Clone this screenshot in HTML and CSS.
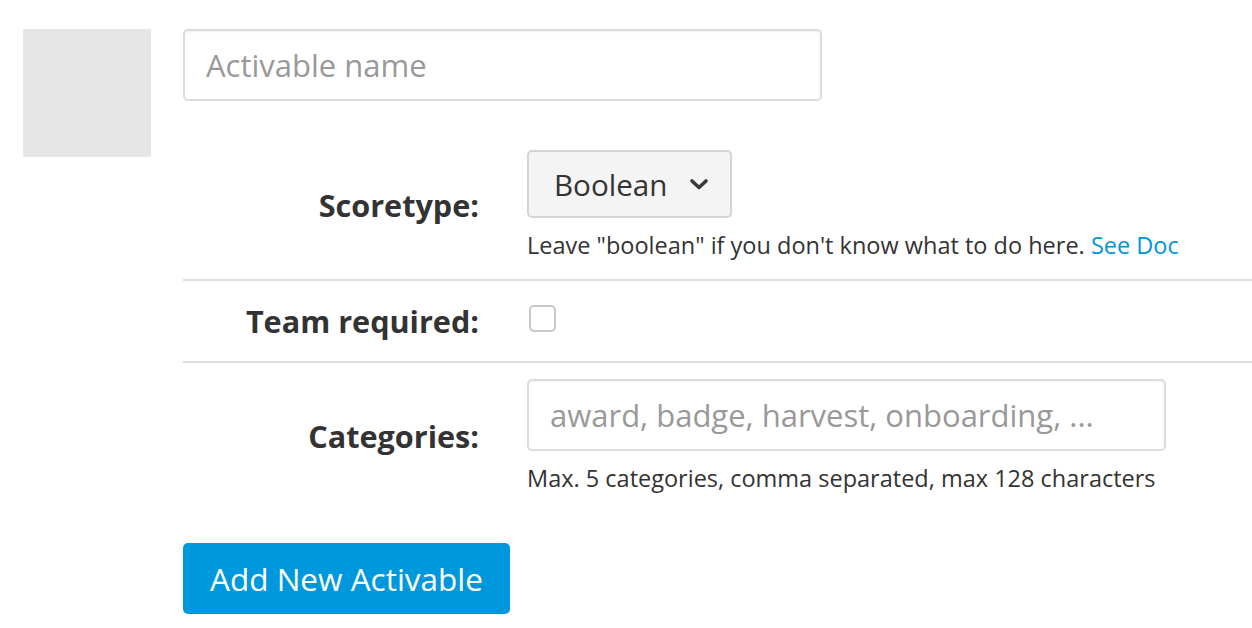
FILE: index.html
```html
<!DOCTYPE html>
<html>
<head>
<meta charset="utf-8">
<link rel="stylesheet" href="styles.css">
</head>
<body>
<div class="page">
  <div class="avatar"></div>
  <form class="form">
    <input class="text-input name-input" type="text" placeholder="Activable name">
    <div class="row row-score">
      <label class="row-label">Scoretype:</label>
      <div class="row-field">
        <div class="select">
          <span>Boolean</span>
          <svg class="chev" width="20" height="12" viewBox="0 0 20 12"><path d="M3 3 L10 9.5 L17 3" fill="none" stroke="#3a3a3a" stroke-width="3.6" stroke-linecap="round" stroke-linejoin="round"/></svg>
        </div>
        <p class="help">Leave "boolean" if you don't know what to do here. <a class="link" href="#">See Doc</a></p>
      </div>
    </div>
    <div class="row row-team">
      <label class="row-label">Team required:</label>
      <div class="row-field">
        <span class="checkbox"></span>
      </div>
    </div>
    <div class="row row-cat">
      <label class="row-label">Categories:</label>
      <div class="row-field">
        <input class="text-input cat-input" type="text" placeholder="award, badge, harvest, onboarding, ...">
        <p class="help">Max. 5 categories, comma separated, max 128 characters</p>
      </div>
    </div>
    <button class="btn" type="button">Add New Activable</button>
  </form>
</div>
</body>
</html>
```

FILE: styles.css
```css
* { box-sizing: border-box; }
body {
  margin: 0;
  font-family: "Open Sans", "Noto Sans", sans-serif;
  color: #333;
  background: #fff;
}
.page {
  display: flex;
  gap: 32px;
  padding: 29px 0 0 23px;
}
.avatar {
  width: 128px;
  height: 128px;
  background: #e6e6e6;
  flex: none;
}
.form {
  flex: 1;
  display: flex;
  flex-direction: column;
  align-items: flex-start;
}
.text-input {
  height: 72px;
  border: 2px solid #dcdcdc;
  border-radius: 5px;
  box-shadow: inset 0 1px 2px rgba(0,0,0,0.06);
  font-family: inherit;
  font-size: 31px;
  padding: 0 21px;
  color: #333;
  outline: none;
}
.text-input::placeholder { color: #999; }
.name-input {
  width: 639px;
  margin-bottom: 35px;
}
.row {
  align-self: stretch;
  display: flex;
  align-items: center;
  gap: 48px;
  border-bottom: 2px solid #ddd;
}
.row-label {
  width: 296px;
  flex: none;
  text-align: right;
  font-weight: 700;
  font-size: 30.6px;
  color: #333;
}
.row-field {
  display: flex;
  flex-direction: column;
  align-items: flex-start;
}
.row-score { padding: 14px 0 19px; }
.row-team { height: 82px; }
.row-cat { padding: 16px 0 20px; border-bottom: none; }
.select {
  width: 205px;
  height: 68px;
  background: #f4f4f4;
  border: 2px solid #d4d4d4;
  border-radius: 5px;
  display: flex;
  align-items: center;
  justify-content: space-between;
  padding: 0 21px 0 25px;
  font-size: 29.6px;
  color: #333;
}
.chev { margin-top: 0; }
.help {
  margin: 0;
  margin-top: 12px;
  font-size: 23.5px;
  line-height: 30px;
  color: #333;
}
.link { color: #0096dd; text-decoration: none; }
.checkbox {
  display: block;
  width: 27px;
  height: 27px;
  border: 2px solid #c8c8c8;
  border-radius: 5px;
  margin: -6px 0 0 2px;
}
.cat-input { width: 639px; }
.btn {
  margin-top: 30px;
  width: 327px;
  height: 71px;
  background: #0098dd;
  color: #fff;
  border: none;
  border-radius: 5px;
  font-family: inherit;
  font-size: 31.5px;
  padding: 0;
}
```
